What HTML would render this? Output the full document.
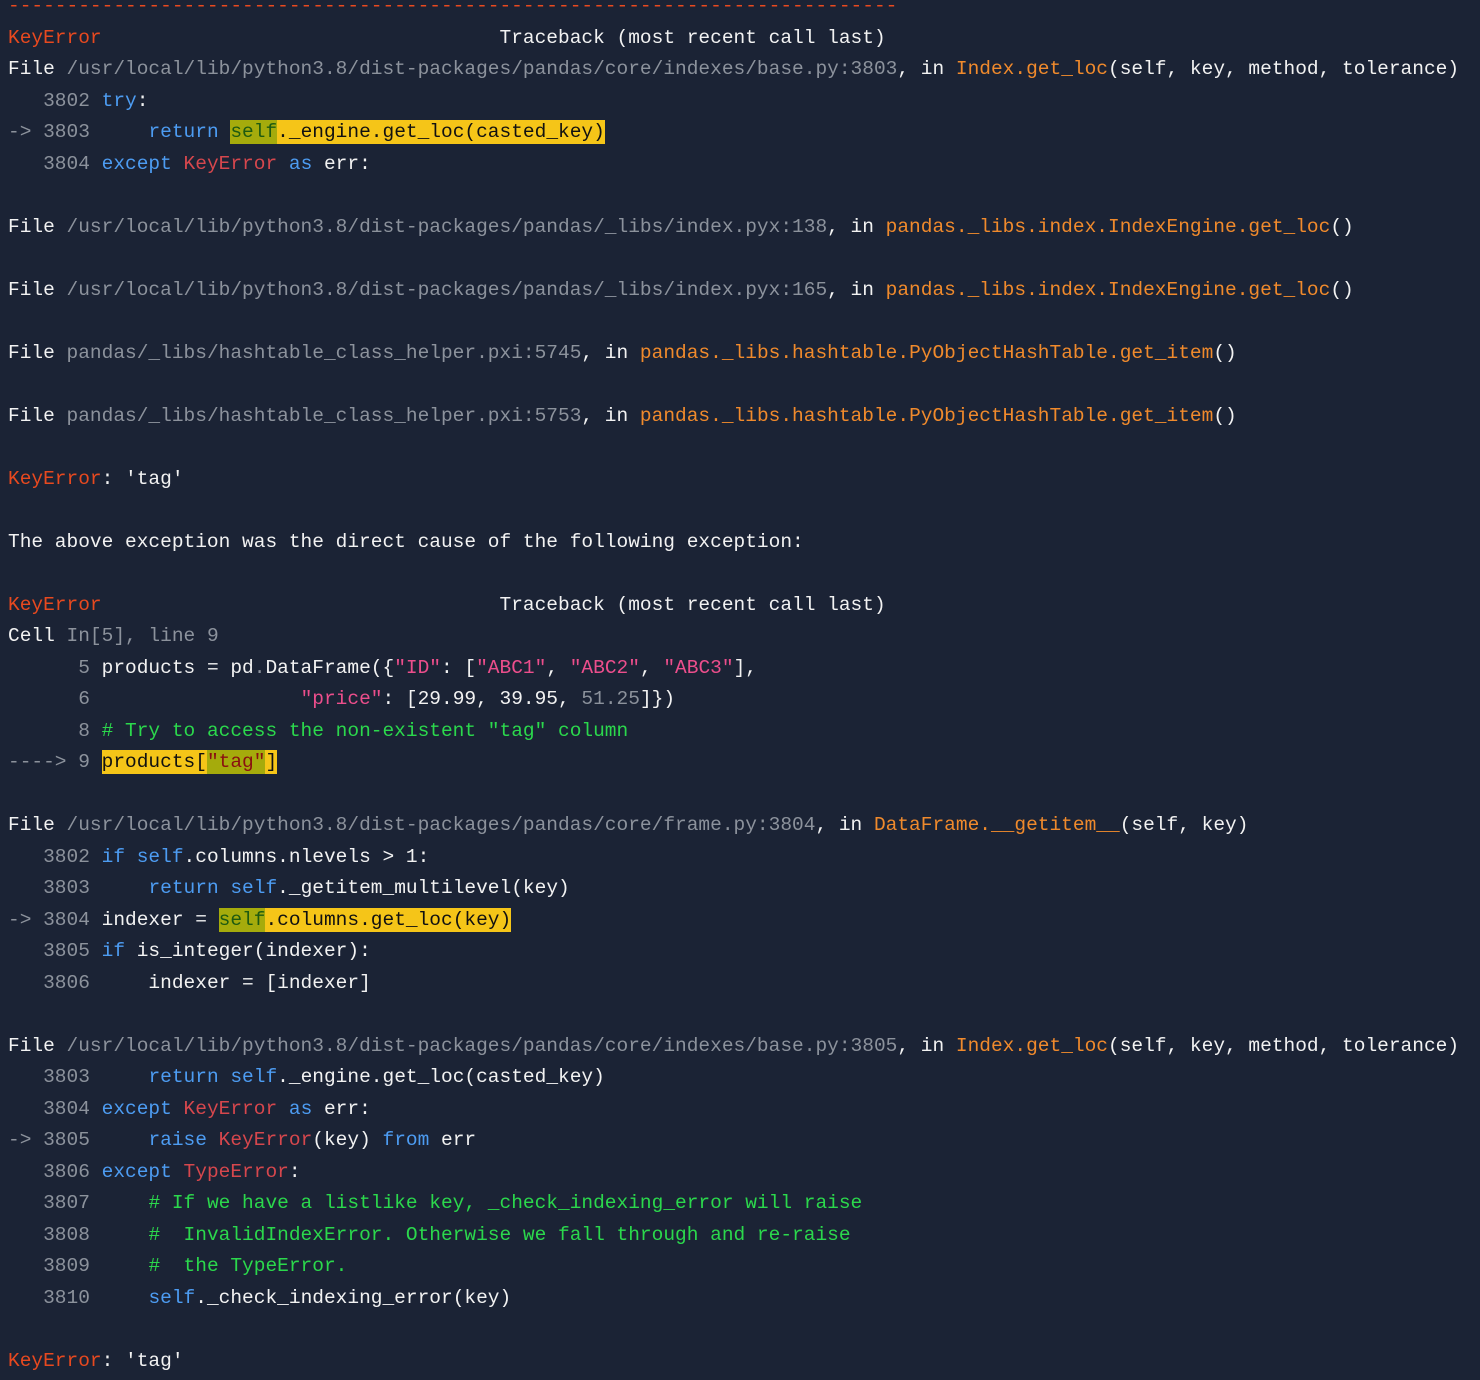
<!DOCTYPE html>
<html><head><meta charset="utf-8"><style>
html,body{margin:0;padding:0;background:#1b2335;width:1480px;height:1380px;overflow:hidden}
pre{margin:-9px 0 0 8px;font-family:"Liberation Mono",monospace;font-size:19.5px;line-height:31.5px;color:#f2f2f2;white-space:pre}
.r{color:#e8491f}.o{color:#f08a2c}.g{color:#8c929c}.b{color:#4d9cf2}.k{color:#d6474d}.c{color:#2bd84c}.p{color:#ec4e8c}
.y{background:#f5c518;color:#111;padding:1px 0}.yg{background:#a5ab0c;color:#1e5a10;padding:1px 0}.ys{background:#a5ab0c;color:#8a1010;padding:1px 0}
</style></head><body><pre><span class="r">----------------------------------------------------------------------------</span>
<span class="r">KeyError</span>                                  Traceback (most recent call last)
File <span class="g">/usr/local/lib/python3.8/dist-packages/pandas/core/indexes/base.py:3803</span>, in <span class="o">Index.get_loc</span>(self, key, method, tolerance)
<span class="g">   3802</span> <span class="b">try</span>:
<span class="g">-&gt; 3803</span>     <span class="b">return</span> <span class="yg">self</span><span class="y">._engine.get_loc(casted_key)</span>
<span class="g">   3804</span> <span class="b">except</span> <span class="k">KeyError</span> <span class="b">as</span> err:

File <span class="g">/usr/local/lib/python3.8/dist-packages/pandas/_libs/index.pyx:138</span>, in <span class="o">pandas._libs.index.IndexEngine.get_loc</span>()

File <span class="g">/usr/local/lib/python3.8/dist-packages/pandas/_libs/index.pyx:165</span>, in <span class="o">pandas._libs.index.IndexEngine.get_loc</span>()

File <span class="g">pandas/_libs/hashtable_class_helper.pxi:5745</span>, in <span class="o">pandas._libs.hashtable.PyObjectHashTable.get_item</span>()

File <span class="g">pandas/_libs/hashtable_class_helper.pxi:5753</span>, in <span class="o">pandas._libs.hashtable.PyObjectHashTable.get_item</span>()

<span class="r">KeyError</span>: 'tag'

The above exception was the direct cause of the following exception:

<span class="r">KeyError</span>                                  Traceback (most recent call last)
Cell <span class="g">In[5], line 9</span>
<span class="g">      5</span> products = pd<span class="g">.</span>DataFrame({<span class="p">"ID"</span>: [<span class="p">"ABC1"</span>, <span class="p">"ABC2"</span>, <span class="p">"ABC3"</span>],
<span class="g">      6</span>                  <span class="p">"price"</span>: [29.99, 39.95, <span class="g">51.25</span>]})
<span class="g">      8</span> <span class="c"># Try to access the non-existent "tag" column</span>
<span class="g">----&gt; 9</span> <span class="y">products[</span><span class="ys">"tag"</span><span class="y">]</span>

File <span class="g">/usr/local/lib/python3.8/dist-packages/pandas/core/frame.py:3804</span>, in <span class="o">DataFrame.__getitem__</span>(self, key)
<span class="g">   3802</span> <span class="b">if</span> <span class="b">self</span>.columns.nlevels &gt; 1:
<span class="g">   3803</span>     <span class="b">return</span> <span class="b">self</span>._getitem_multilevel(key)
<span class="g">-&gt; 3804</span> indexer = <span class="yg">self</span><span class="y">.columns.get_loc(key)</span>
<span class="g">   3805</span> <span class="b">if</span> is_integer(indexer):
<span class="g">   3806</span>     indexer = [indexer]

File <span class="g">/usr/local/lib/python3.8/dist-packages/pandas/core/indexes/base.py:3805</span>, in <span class="o">Index.get_loc</span>(self, key, method, tolerance)
<span class="g">   3803</span>     <span class="b">return</span> <span class="b">self</span>._engine.get_loc(casted_key)
<span class="g">   3804</span> <span class="b">except</span> <span class="k">KeyError</span> <span class="b">as</span> err:
<span class="g">-&gt; 3805</span>     <span class="b">raise</span> <span class="k">KeyError</span>(key) <span class="b">from</span> err
<span class="g">   3806</span> <span class="b">except</span> <span class="k">TypeError</span>:
<span class="g">   3807</span>     <span class="c"># If we have a listlike key, _check_indexing_error will raise</span>
<span class="g">   3808</span>     <span class="c">#  InvalidIndexError. Otherwise we fall through and re-raise</span>
<span class="g">   3809</span>     <span class="c">#  the TypeError.</span>
<span class="g">   3810</span>     <span class="b">self</span>._check_indexing_error(key)

<span class="r">KeyError</span>: 'tag'</pre></body></html>
